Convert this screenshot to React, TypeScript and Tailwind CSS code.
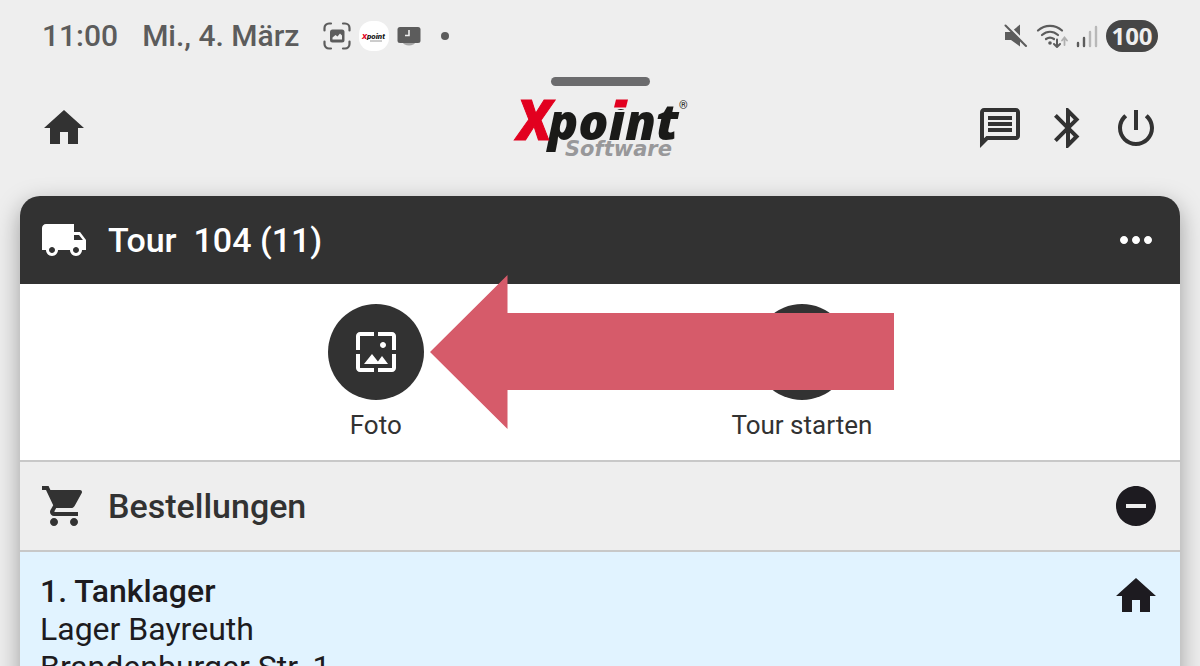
type IconProps = { path: string; className?: string };

const ICONS = {
  home: "M10 20v-6h4v6h5v-8h3L12 3 2 12h3v8z",
  message:
    "M4 4h16v12H5.17L4 17.17V4m0-2c-1.1 0-1.99.9-1.99 2L2 22l4-4h14c1.1 0 2-.9 2-2V4c0-1.1-.9-2-2-2H4zm2 10h12v2H6v-2zm0-3h12v2H6V9zm0-3h12v2H6V6z",
  bluetooth:
    "M17.71 7.71L12 2h-1v7.59L6.41 5 5 6.41 10.59 12 5 17.59 6.41 19 11 14.41V22h1l5.71-5.71-4.3-4.29 4.3-4.29zM13 5.83l1.88 1.88L13 9.59V5.83zm1.88 10.46L13 18.17v-3.76l1.88 1.88z",
  power:
    "M13 3h-2v10h2V3zm4.83 2.17l-1.42 1.42C17.99 7.86 19 9.81 19 12c0 3.87-3.13 7-7 7s-7-3.13-7-7c0-2.19 1.01-4.14 2.58-5.42L6.17 5.17C4.23 6.82 3 9.26 3 12c0 4.97 4.03 9 9 9s9-4.03 9-9c0-2.74-1.23-5.18-3.17-6.83z",
  truck:
    "M20 8h-3V4H3c-1.1 0-2 .9-2 2v11h2c0 1.66 1.34 3 3 3s3-1.34 3-3h6c0 1.66 1.34 3 3 3s3-1.34 3-3h2v-5l-3-4zM6 18.5c-.83 0-1.5-.67-1.5-1.5s.67-1.5 1.5-1.5 1.5.67 1.5 1.5-.67 1.5-1.5 1.5zm13.5-9l1.96 2.5H17V9.5h2.5zm-1.5 9c-.83 0-1.5-.67-1.5-1.5s.67-1.5 1.5-1.5 1.5.67 1.5 1.5-.67 1.5-1.5 1.5z",
  more: "M6 10c-1.1 0-2 .9-2 2s.9 2 2 2 2-.9 2-2-.9-2-2-2zm12 0c-1.1 0-2 .9-2 2s.9 2 2 2 2-.9 2-2-.9-2-2-2zm-6 0c-1.1 0-2 .9-2 2s.9 2 2 2 2-.9 2-2-.9-2-2-2z",
  wallpaper:
    "M4 4h7V2H4c-1.1 0-2 .9-2 2v7h2V4zm6 9l-4 5h12l-3-4-2.03 2.71L10 13zm7-4.5c0-.83-.67-1.5-1.5-1.5S14 7.67 14 8.5s.67 1.5 1.5 1.5S17 9.33 17 8.5zM20 2h-7v2h7v7h2V4c0-1.1-.9-2-2-2zm0 18h-7v2h7c1.1 0 2-.9 2-2v-7h-2v7zM4 13H2v7c0 1.1.9 2 2 2h7v-2H4v-7z",
  play: "M8 5v14l11-7z",
  cart: "M7 18c-1.1 0-1.99.9-1.99 2S5.9 22 7 22s2-.9 2-2-.9-2-2-2zM1 2v2h2l3.6 7.59-1.35 2.45c-.16.28-.25.61-.25.96 0 1.1.9 2 2 2h12v-2H7.42c-.14 0-.25-.11-.25-.25l.03-.12.9-1.63h7.45c.75 0 1.41-.41 1.75-1.03l3.58-6.49c.08-.14.12-.31.12-.48 0-.55-.45-1-1-1H5.21l-.94-2H1zm16 16c-1.1 0-1.99.9-1.99 2s.89 2 1.99 2 2-.9 2-2-.9-2-2-2z",
  minus: "M12 2C6.48 2 2 6.48 2 12s4.48 10 10 10 10-4.48 10-10S17.52 2 12 2zm5 11H7v-2h10v2z",
};

const HEADER_ACTIONS = [
  { label: "Nachrichten", path: ICONS.message },
  { label: "Bluetooth", path: ICONS.bluetooth },
  { label: "Abmelden", path: ICONS.power },
];

const TOUR_ACTIONS = [
  { label: "Foto", path: ICONS.wallpaper },
  { label: "Tour starten", path: ICONS.play },
];

function Icon({ path, className = "" }: IconProps) {
  return (
    <svg viewBox="0 0 24 24" className={`size-12 shrink-0 fill-current ${className}`} aria-hidden="true">
      <path d={path} />
    </svg>
  );
}

function StatusBar() {
  return (
    <div className="flex h-[72px] shrink-0 items-center justify-between px-[42px] text-[#5c5c5c]">
      <div className="flex items-center">
        <span className="text-[30px] font-medium leading-9">11:00</span>
        <span className="ml-6 text-[30px] font-medium leading-9">Mi., 4. März</span>

        {/* Screenshot notification */}
        <svg viewBox="0 0 28 28" className="ml-6 size-7" fill="none" aria-hidden="true">
          <path
            d="M1.5 8.5V6a4.5 4.5 0 0 1 4.5-4.5h2M20 1.5h2A4.5 4.5 0 0 1 26.5 6v2.5M26.5 19.5V22a4.5 4.5 0 0 1-4.5 4.5h-2M8 26.5H6A4.5 4.5 0 0 1 1.5 22v-2.5"
            stroke="currentColor"
            strokeWidth="2.2"
            strokeLinecap="round"
          />
          <rect x="7" y="7.5" width="14.5" height="13" rx="2.5" fill="currentColor" />
          <path d="M9.5 17.5v-2l3-2.5 2 1.5 2.5-3 2 2v4z" fill="#eee" />
        </svg>

        {/* App notification */}
        <svg viewBox="0 0 30 30" className="ml-2 size-[30px]" aria-hidden="true">
          <rect width="30" height="30" rx="13" fill="#fff" />
          <text x="3" y="18" fontFamily="Roboto, sans-serif" fontSize="8" fontWeight="900" fontStyle="italic" fill="#1a1a18">
            <tspan fill="#e2001f">X</tspan>point
          </text>
          <path d="M11 20h12" stroke="#9a9a9a" strokeWidth="1" />
        </svg>

        {/* Screen timer */}
        <svg viewBox="0 0 24 20" className="ml-2 h-5 w-6" aria-hidden="true">
          <ellipse cx="12" cy="16.5" rx="6" ry="3" fill="#a5a5a5" />
          <rect x="0.5" y="1" width="23" height="16" rx="2.5" fill="currentColor" />
          <path d="M12 4v5.5H8" fill="none" stroke="#eee" strokeWidth="1.6" />
        </svg>
        <span className="ml-5 size-2 rounded-full bg-[#5c5c5c]" />
      </div>

      <div className="flex items-center">
        <svg viewBox="0 0 24 24" className="size-6" aria-hidden="true">
          <path d="M1 8h6l9-7.5v22L7 16H1z" fill="currentColor" />
          <path d="M2.5 0L24 21.5" stroke="#eee" strokeWidth="2.5" />
          <path d="M1.5 1.5L22 22" stroke="currentColor" strokeWidth="2" strokeLinecap="round" />
        </svg>
        <svg viewBox="0 0 32 24" className="ml-2 h-6 w-8" fill="none" strokeLinecap="round" aria-hidden="true">
          <path d="M2 6.5C9 .2 19 .2 26 6.5M6 11c5-4.3 11-4.3 16 0M10 15c2.7-2 5.3-2 8 0" stroke="currentColor" strokeWidth="2.2" />
          <circle cx="14" cy="19" r="1.8" fill="currentColor" />
          <path d="M21 15.5v7M18 20l3 3 3-3" stroke="currentColor" strokeWidth="2" />
          <path d="M28.5 21v-7M26 16.5l2.5-3 2.5 3" stroke="#b0b0b0" strokeWidth="1.8" />
        </svg>
        <svg viewBox="0 0 22 24" className="ml-2 h-6 w-[22px]" fill="none" strokeWidth="2.4" strokeLinecap="round" aria-hidden="true">
          <path d="M2 19v3M8 14v8" stroke="currentColor" />
          <path d="M14 8v14M20 3v19" stroke="#b8b8b8" />
        </svg>
        <span className="ml-2 flex h-8 w-[52px] items-center justify-center rounded-full bg-[#464646] font-['Open_Sans'] text-2xl font-bold leading-8 text-[#eee]">
          100
        </span>
      </div>
    </div>
  );
}

function Logo() {
  return (
    <svg viewBox="0 0 172 62" className="h-[62px] w-[172px] overflow-visible" role="img" aria-label="Xpoint Software">
      <text x="34" y="43" fontFamily="Open Sans, sans-serif" fontSize="50" fontWeight="800" fontStyle="italic" fill="#1a1a18">
        point
      </text>
      <text x="3" y="43" fontFamily="Roboto, sans-serif" fontSize="56" fontWeight="900" fontStyle="italic" fill="#e2001f" stroke="#e2001f" strokeWidth="1">
        X
      </text>
      {/* Red dot over the i */}
      <path d="M98 0h20l-3 12H96z" fill="#eee" />
      <path d="M102 2.5h12l-2 8h-12z" fill="#e2001f" />
      <text x="51" y="59" fontFamily="DejaVu Sans, sans-serif" fontSize="21" fontWeight="700" fontStyle="italic" fill="#98989a">
        Software
      </text>
      <text x="165" y="12" fontFamily="Roboto, sans-serif" fontSize="11" fill="#1a1a18">®</text>
    </svg>
  );
}

export default function App() {
  return (
    <div className="flex h-screen flex-col overflow-hidden bg-[#eee] font-['Roboto',sans-serif] text-[#323232]">
      <StatusBar />
      <div className="mx-auto mt-[5px] h-[9px] w-[99px] shrink-0 rounded-full bg-[#6b6b6d]" />

      <header className="grid h-[84px] shrink-0 grid-cols-[1fr_auto_1fr] items-center px-10">
        <button type="button" aria-label="Startseite" className="justify-self-start">
          <Icon path={ICONS.home} />
        </button>
        <Logo />
        <nav className="flex gap-5 justify-self-end">
          {HEADER_ACTIONS.map((action) => (
            <button key={action.label} type="button" aria-label={action.label}>
              <Icon path={action.path} />
            </button>
          ))}
        </nav>
      </header>

      <main className="mx-5 mt-[26px] flex grow flex-col rounded-t-[20px] shadow-[0_8px_24px_rgba(0,0,0,0.35)]">
        <div className="flex h-[88px] shrink-0 items-center rounded-t-[20px] bg-[#323232] px-5 text-white">
          <Icon path={ICONS.truck} />
          <h1 className="ml-5 grow whitespace-pre text-[34px] font-medium leading-10">Tour  104 (11)</h1>
          <button type="button" aria-label="Mehr">
            <Icon path={ICONS.more} />
          </button>
        </div>

        <section className="relative flex shrink-0 justify-evenly bg-white pb-[18px] pt-5">
          {TOUR_ACTIONS.map((action) => (
            <button key={action.label} type="button" className="flex flex-col items-center">
              <span className="flex size-24 items-center justify-center rounded-full bg-[#323232] text-white">
                <Icon path={action.path} />
              </span>
              <span className="mt-2 text-[26px] leading-[34px]">{action.label}</span>
            </button>
          ))}
          {/* Pointer to the photo button */}
          <svg viewBox="0 0 464 154" className="pointer-events-none absolute -top-[9px] left-[410px] h-[154px] w-[464px]" aria-hidden="true">
            <path d="M0 77L77.5 0v38H464v77H77.5v39z" fill="#d65b6a" />
          </svg>
        </section>

        <section className="flex h-[92px] shrink-0 items-center border-y-2 border-[#c8c8c8] bg-[#eee] px-5">
          <Icon path={ICONS.cart} />
          <h2 className="ml-5 grow text-[34px] font-medium leading-10">Bestellungen</h2>
          <button type="button" aria-label="Einklappen" className="text-[#1d1b20]">
            <Icon path={ICONS.minus} />
          </button>
        </section>

        <section className="flex grow items-start justify-between bg-[#e1f3ff] p-5 text-[#1d1b20]">
          <address className="text-[32px] not-italic leading-[38px]">
            <h3 className="font-medium">1. Tanklager</h3>
            <p>Lager Bayreuth</p>
            <p>Brandenburger Str. 1</p>
          </address>
          <Icon path={ICONS.home} />
        </section>
      </main>
    </div>
  );
}
